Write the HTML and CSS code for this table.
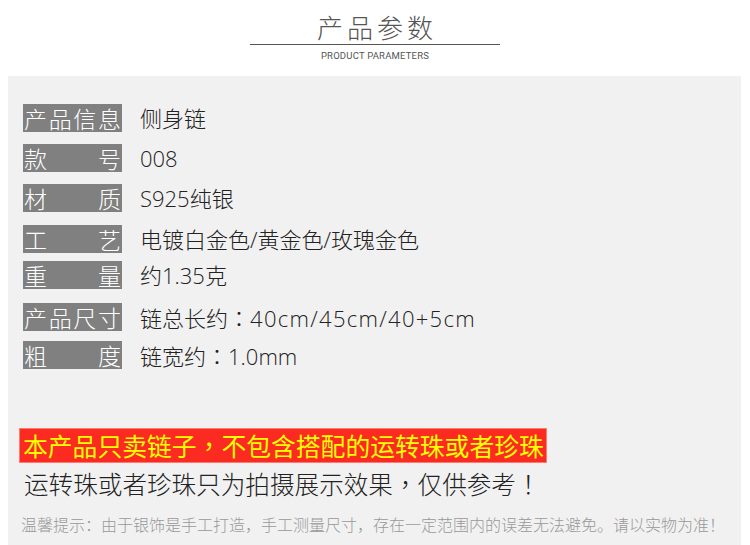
FILE: index.html
```html
<!DOCTYPE html>
<html lang="zh-CN">
<head>
    <meta charset="UTF-8">
    <meta name="viewport" content="width=device-width, initial-scale=1.0">
    <title>产品参数</title>
    <link rel="stylesheet" href="styles.css">
</head>
<body>
    <div class="header">
        <h1>产品参数</h1>
        <div class="divider"></div>
        <p class="subtitle">PRODUCT PARAMETERS</p>
    </div>

    <div class="panel">
        <div class="params">
            <div class="row"><span class="label">产品信息</span><span class="value">侧身链</span></div>
            <div class="row"><span class="label">款号</span><span class="value">008</span></div>
            <div class="row"><span class="label">材质</span><span class="value">S925纯银</span></div>
            <div class="row loose"><span class="label">工艺</span><span class="value">电镀白金色/黄金色/玫瑰金色</span></div>
            <div class="row tight"><span class="label">重量</span><span class="value">约1.35克</span></div>
            <div class="row wide"><span class="label">产品尺寸</span><span class="value">链总长约<span class="punct" lang="zh-TW">：</span><span class="spaced">40cm/45cm/40+5cm</span></span></div>
            <div class="row mid"><span class="label">粗度</span><span class="value">链宽约<span class="punct" lang="zh-TW">：</span>1.0mm</span></div>
        </div>

        <div class="notice">
            <p class="warning">本产品只卖链子<span class="punct" lang="zh-TW">，</span>不包含搭配的运转珠或者珍珠</p>
            <p class="note">运转珠或者珍珠只为拍摄展示效果<span class="punct" lang="zh-TW">，</span>仅供参考<span class="punct" lang="zh-TW">！</span></p>
            <p class="tip">温馨提示：由于银饰是手工打造，手工测量尺寸，存在一定范围内的误差无法避免。请以实物为准！</p>
        </div>
    </div>
</body>
</html>
```

FILE: styles.css
```css
body {
    margin: 0;
    background: #fff;
    font-family: "Noto Sans CJK SC", "Noto Sans", sans-serif;
    font-weight: 300;
    color: #222;
}
.header {
    height: 76px;
    text-align: center;
    padding-top: 12px;
    box-sizing: border-box;
}
h1 {
    margin: 0;
    font-size: 26px;
    font-weight: 300;
    line-height: 30px;
    letter-spacing: 4px;
    color: #555;
    padding-left: 4px;
}
.divider {
    width: 250px;
    height: 1px;
    margin: 2px auto 0;
    background: #555;
}
.subtitle {
    margin: 5px 0 0;
    font-family: Roboto, "Liberation Sans", sans-serif;
    font-weight: normal;
    font-size: 9.5px;
    line-height: 12px;
    letter-spacing: 0.2px;
    color: #555;
}
.panel {
    margin: 0 9px 0 8px;
    background: #f1f1f1;
    padding: 28px 0 14px;
    min-height: 455px;
    box-sizing: border-box;
}
.row {
    display: flex;
    align-items: center;
    height: 28px;
    margin: 12px 0 0 15px;
}
.row:first-child {
    margin-top: 0;
}
.row.loose {
    margin-top: 13px;
}
.row.tight {
    margin-top: 8px;
}
.row.wide {
    margin-top: 14px;
}
.row.mid {
    margin-top: 10px;
}
.label {
    width: 99px;
    height: 28px;
    box-sizing: border-box;
    padding: 0 1px;
    background: #808080;
    color: #fff;
    font-size: 23px;
    line-height: 28px;
    text-align: justify;
    text-align-last: justify;
}
.value {
    margin-left: 18px;
    font-family: "Open Sans", "Noto Sans CJK SC", sans-serif;
    font-size: 22px;
    line-height: 28px;
    color: #222;
}
.spaced {
    letter-spacing: 1.3px;
}
/* full-width punctuation centred in its cell, as in the original artwork */
.punct {
    font-family: "Noto Sans CJK TC", "Noto Sans CJK SC", sans-serif;
}
.notice {
    margin-top: 59px;
}
.notice p {
    margin: 0;
}
.warning {
    display: inline-block;
    margin-left: 11px !important;
    padding: 0 3px 0 4px;
    height: 35px;
    line-height: 35px;
    background: #fb2b22;
    box-shadow: inset 0 0 0 1px #ff7b70;
    color: #ffff00;
    font-size: 24.8px;
    font-weight: normal;
}
.note {
    margin: 6px 0 0 16px !important;
    font-size: 24.6px;
    line-height: 28px;
    color: #222;
}
.tip {
    margin: 17px 0 0 13px !important;
    font-size: 16px;
    line-height: 20px;
    color: #999;
}
```
